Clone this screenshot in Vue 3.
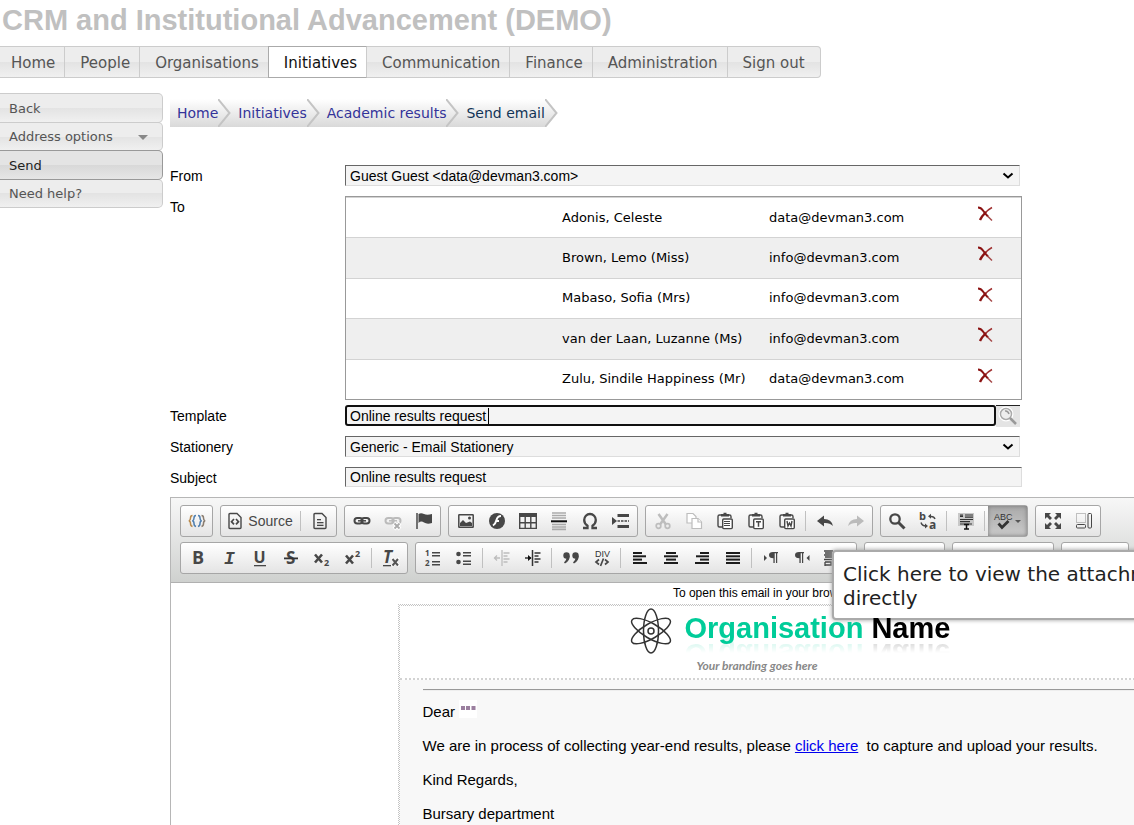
<script setup>
import { ref } from 'vue'

const nav = ['Home', 'People', 'Organisations', 'Initiatives', 'Communication', 'Finance', 'Administration', 'Sign out']
const side = [
  { label: 'Back' },
  { label: 'Address options', menu: true },
  { label: 'Send', active: true },
  { label: 'Need help?' },
]
const crumbs = ['Home', 'Initiatives', 'Academic results', 'Send email']
const recipients = [
  { name: 'Adonis, Celeste', email: 'data@devman3.com' },
  { name: 'Brown, Lemo (Miss)', email: 'info@devman3.com' },
  { name: 'Mabaso, Sofia (Mrs)', email: 'info@devman3.com' },
  { name: 'van der Laan, Luzanne (Ms)', email: 'info@devman3.com' },
  { name: 'Zulu, Sindile Happiness (Mr)', email: 'data@devman3.com' },
]
const template = ref('Online results request')
const subject = ref('Online results request')

const D = '#474747'
const lines = (rows) => rows.map(([x, y, w, h = 2]) => `<rect x="${x}" y="${y}" width="${w}" height="${h}" fill="${D}"/>`).join('')
const glyph = (t, x, y, size, extra = '') => `<text x="${x}" y="${y}" font-size="${size}" font-weight="bold" font-family="Open Sans, sans-serif" fill="${D}" ${extra}>${t}</text>`
const clip = `<path d="M5 3H3.5Q2 3 2 4.500V13.500Q2 15 3.500 15H6M13 3h.5Q15 3 15 4.500V6" fill="none" stroke="${D}" stroke-width="1.400"/><path d="M5 4.500V2h2.500V.8h3V2H13v2.500z" fill="${D}"/><rect x="6.700" y="7" width="9.600" height="9.600" rx="1" fill="#fff" stroke="${D}" stroke-width="1.400"/>`
const pilcrow = (x) => `<path d="M${x + 4} 3H${x + 9}V4.300H${x + 8.2}V14H${x + 7}V4.300H${x + 5.7}V14H${x + 4.4}V9.200Q${x} 9.200 ${x} 6Q${x} 3 ${x + 4} 3z" fill="${D}"/>`
const chain = (c) => `<g fill="none" stroke="${c}"><rect x="1.500" y="6" width="8" height="5.500" rx="2.700" stroke-width="2"/><rect x="8.500" y="6" width="8" height="5.500" rx="2.700" stroke-width="2"/><path d="M5 8.800h8" stroke-width="1.500"/></g>`

const icons = {
  braces: '<g fill="none" stroke-width="1.500"><path d="M4.500 3.500Q2.500 3.500 2.500 6T.8 9Q2.500 9 2.500 11.500T4.500 14.500" stroke="#b98a4d"/><path d="M8 3.500Q6 3.500 6 6T4.300 9Q6 9 6 11.500T8 14.500" stroke="#4f7fb0"/><path d="M10 3.500Q12 3.500 12 6T13.700 9Q12 9 12 11.500T10 14.500" stroke="#4f7fb0"/><path d="M13.500 3.500Q15.500 3.500 15.500 6T17.200 9Q15.500 9 15.500 11.500T13.500 14.500" stroke="#8a7d70"/></g>',
  source: `<path d="M3 2.500Q3 1.500 4 1.500H11L15 5.500V15.500Q15 16.500 14 16.500H4Q3 16.500 3 15.500z" fill="none" stroke="${D}" stroke-width="1.400"/><path d="M8 7L5.500 9.700 8 12.400M10 7l2.500 2.700L10 12.400" fill="none" stroke="${D}" stroke-width="1.700"/>`,
  doc: `<path d="M3 2.500Q3 1.500 4 1.500H11L15 5.500V15.500Q15 16.500 14 16.500H4Q3 16.500 3 15.500z" fill="none" stroke="${D}" stroke-width="1.400"/>` + lines([[6, 7, 4, 1.3], [6, 10, 6.5, 1.3], [6, 12.7, 6.5, 1.3]]),
  link: chain(D),
  unlink: chain('#bbb') + '<path d="M10 11l6 6M16 11l-6 6" stroke="#fff" stroke-width="4"/><path d="M10.500 11.500l5 5M15.500 11.500l-5 5" stroke="#aaa" stroke-width="1.800"/>',
  flag: `<path d="M2 1V17" stroke="${D}" stroke-width="1.500"/><path d="M3.500 2Q6 .5 9 2T17 2V11Q12 12.500 9 10.500T3.500 11z" fill="${D}"/>`,
  image: `<rect x="1.800" y="2.800" width="14.400" height="12.400" rx=".5" fill="none" stroke="${D}" stroke-width="1.500"/><path d="M3 14V11L6 8l3 3 4-1.500 2 1.500v3z" fill="${D}"/><circle cx="12.500" cy="6" r="1.500" fill="${D}"/>`,
  flash: `<circle cx="9" cy="9" r="8" fill="${D}"/><path d="M13 4Q9.500 4 8.500 8T5 13.500M8 9h3" fill="none" stroke="#fff" stroke-width="2"/>`,
  table: `<rect x="0" y="1" width="18" height="4" fill="${D}"/><path d="M.7 5v11.400h16.600V5M.7 10.700h16.600M6.200 5v11M11.800 5v11" fill="none" stroke="${D}" stroke-width="1.400"/>`,
  hr: '<path d="M2 1h14M2 3.500h14M2 6h14M2 12.500h14M2 15h14M2 17.300h14" stroke="#aaa" stroke-width="1.700"/><rect x="1" y="8.300" width="16" height="2" fill="#111"/>',
  omega: `<path d="M2 16h4.500v-2.200Q3.200 11.500 3.200 8A5.800 6 0 0 1 14.800 8Q14.800 11.500 11.500 13.800V16H16" fill="none" stroke="${D}" stroke-width="2.300"/>`,
  pagebreak: `<path d="M0 5l5 4-5 4z" fill="${D}"/><path d="M5.500 3.500H17M5.500 14.500H17" stroke="${D}" stroke-width="3"/><path d="M5.500 9H17" stroke="${D}" stroke-width="1.500" stroke-dasharray="2.500 1"/>`,
  cut: '<g fill="none" stroke="#bdbdbd"><path d="M4.500 2L12 12.500M13.500 2L6 12.500" stroke-width="2.500"/><circle cx="4.500" cy="14" r="2.300" stroke-width="1.700"/><circle cx="13.500" cy="14" r="2.300" stroke-width="1.700"/></g>',
  copy: '<g fill="#fff" stroke="#bdbdbd" stroke-width="1.200"><path d="M2 1.500H8L11 4.500V11H2z"/><path d="M7 6.500H13L16.500 10V16.500H7z"/><path d="M13 6.500V10h3.500"/></g>',
  paste: clip + lines([[8, 9, 6, 1], [8, 11, 6, 1], [8, 13, 6, 1]]),
  pastetext: clip + `<path d="M9 9.800h5M11.500 9.800v5" stroke="${D}" stroke-width="1.500"/>`,
  pasteword: clip + `<path d="M9 9l1 5 1.500-3 1.500 3 1-5" fill="none" stroke="${D}" stroke-width="1.400"/>`,
  undo: `<path d="M1 9l7-5.500V7Q15.500 7 17 14Q13.500 10.500 8 11v3.500z" fill="${D}"/>`,
  redo: '<path d="M17 9l-7-5.500V7Q2.500 7 1 14Q4.500 10.500 10 11v3.500z" fill="#bbb"/>',
  find: `<circle cx="7" cy="7" r="4.700" fill="none" stroke="${D}" stroke-width="2.300"/><path d="M10.500 10.500l6 6" stroke="${D}" stroke-width="3"/>`,
  replace: glyph('b', 0, 8, 11) + glyph('a', 10, 17, 12) + `<path d="M16 7Q15 4 11 4.500M2 10.500Q3 14 7 14" fill="none" stroke="${D}" stroke-width="1.400"/><path d="M12 1.800v5l-3-2.500zM6 11.500v5l3-2.500z" fill="${D}"/>`,
  selectall: '<rect x="1" y="1" width="16" height="13" fill="#c8c8c8"/><path d="M3 3h3M3 4.300h3M8 3h8M8 5.200h8M3 7.500h13M3 9.700h10M3 12h12" stroke="#333" stroke-width="1.200"/><path d="M7 12.500h5M9.500 12.500v4M7 17h5" stroke="#111" stroke-width="1.500"/>',
  spell: `<text x="-1" y="8" font-size="9" font-family="Liberation Sans, sans-serif" fill="#333">ABC</text><path d="M3.500 11.500L7 15.500 13.500 9" fill="none" stroke="#333" stroke-width="2.800"/>`,
  maximize: `<g fill="${D}"><path d="M1 1h6L5 3l3 3-2 2-3-3-2 2zM17 1v6l-2-2-3 3-2-2 3-3-2-2zM1 17v-6l2 2 3-3 2 2-3 3 2 2zM17 17h-6l2-2-3-3 2-2 3 3 2-2z"/></g>`,
  blocks: `<path d="M1.500 1.500h9v9h-9z" fill="none" stroke="#888" stroke-dasharray="1 1"/><rect x="1.500" y="12.500" width="9" height="3.500" rx="1" fill="none" stroke="${D}"/><rect x="13" y="1.500" width="3.500" height="14.500" rx="1" fill="none" stroke="${D}"/>`,
  bold: glyph('B', 3, 15, 18),
  italic: glyph('I', 4, 15, 18, 'font-style="italic" style="font-family:Liberation Mono"'),
  underline: glyph('U', 2.5, 14, 16) + lines([[3, 16, 12, 1.3]]),
  strike: glyph('S', 4, 15, 17) + '<rect x="2" y="8.500" width="14" height="1.800" fill="#333"/>',
  sub: '<path d="M2 5.500l7 8M9 5.500l-7 8" stroke="#474747" stroke-width="2.600"/>' + glyph('2', 11, 17, 9),
  sup: '<path d="M2 6.500l7 8M9 6.500l-7 8" stroke="#474747" stroke-width="2.600"/>' + glyph('2', 11, 8, 9),
  clear: glyph('T', 1, 14, 17, 'font-style="italic"') + lines([[1, 16, 8, 1.3]]) + '<path d="M10 9l7 8M17 9l-7 8" stroke="#fff" stroke-width="3"/><path d="M10.500 10l5.500 6.500M16 10l-5.500 6.500" stroke="#555" stroke-width="2"/>',
  ol: glyph('1', 1, 7, 8) + glyph('2', 1, 17, 8) + lines([[8, 3, 8, 1.5], [8, 6, 8, 1.5], [8, 12, 8, 1.5], [8, 15, 8, 1.5]]),
  ul: `<circle cx="3.500" cy="5" r="2.300" fill="${D}"/><circle cx="3.500" cy="13" r="2.300" fill="${D}"/>` + lines([[8, 3, 8, 1.5], [8, 6, 8, 1.5], [8, 11.5, 8, 1.5], [8, 14.5, 8, 1.5]]),
  outdent: '<path d="M9 1v16M1 9h6M4 6.500L1.500 9 4 11.500M10.500 4h6M10.500 7h4M10.500 10h6M10.500 13h4" fill="none" stroke="#bdbdbd" stroke-width="1.300"/>',
  indent: '<path d="M8.500 1v16M1 9h6M10.500 4h6M10.500 7h4M10.500 10h6M10.500 13h4" fill="none" stroke="#333" stroke-width="1.500"/><path d="M4 6l3.500 3L4 12z" fill="#111"/>',
  quote: `<g fill="${D}"><circle cx="4.500" cy="6.500" r="3.200"/><path d="M7.700 6.500Q8 12 3 14.500L2 13.500Q4.500 11.500 4.500 9z"/><circle cx="13.500" cy="6.500" r="3.200"/><path d="M16.700 6.500Q17 12 12 14.500L11 13.500Q13.500 11.500 13.500 9z"/></g>`,
  div: `<text x="2" y="7.500" font-size="9" font-family="Liberation Sans, sans-serif" fill="#333">DIV</text><path d="M6 10.500L3 13l3 2.500M12 10.500l3 2.500-3 2.500M10.500 9.500l-3 7.500" fill="none" stroke="${D}" stroke-width="1.700"/>`,
  left: lines([[2, 3, 9], [2, 6.3, 13], [2, 9.6, 9], [2, 13, 14]]),
  center: lines([[4, 3, 10], [2, 6.3, 14], [4, 9.6, 10], [2, 13, 14]]),
  right: lines([[7, 3, 9], [3, 6.3, 13], [7, 9.6, 9], [2, 13, 14]]),
  justify: lines([[2, 3, 14], [2, 6.3, 14], [2, 9.6, 14], [2, 13, 14]]),
  ltr: `<path d="M2 6l3 3-3 3z" fill="${D}"/>` + pilcrow(7),
  rtl: pilcrow(2) + `<path d="M16.500 6l-3 3 3 3z" fill="${D}"/>`,
  language: '<path d="M2 2h9M3 4h7M2 6h9M3 8h7M2 10.500h9M3 13v4M3 13h6v3H3" fill="none" stroke="#444" stroke-width="1.300"/>',
}
for (const k of ['left', 'center', 'right', 'justify']) icons[k] = icons[k].replaceAll(D, '#1c1c1c')

const S = '|'
const rows = [
  [
    ['braces'],
    ['source', S, 'doc'],
    ['link', 'unlink', 'flag'],
    ['image', 'flash', 'table', 'hr', 'omega', 'pagebreak'],
    ['cut', 'copy', 'paste', 'pastetext', 'pasteword', S, 'undo', 'redo'],
    ['find', 'replace', S, 'selectall', S, 'spell'],
    ['maximize', 'blocks'],
  ],
  [
    ['bold', 'italic', 'underline', 'strike', 'sub', 'sup', S, 'clear'],
    ['ol', 'ul', S, 'outdent', 'indent', S, 'quote', 'div', S, 'left', 'center', 'right', 'justify', S, 'ltr', 'rtl', 'language'],
    ['combo-s'],
    ['combo-m'],
    ['combo-xs'],
  ],
]
</script>

<template>
  <div class="page">
    <h1>CRM and Institutional Advancement (DEMO)</h1>
    <nav class="topnav" aria-label="Main">
      <a v-for="n in nav" :key="n" href="#" :class="{ active: n === 'Initiatives' }">{{ n }}</a>
    </nav>

    <div class="columns">
      <aside>
        <a v-for="s in side" :key="s.label" href="#" :class="{ active: s.active }">
          {{ s.label }}<i v-if="s.menu" class="caret-down"></i>
        </a>
      </aside>

      <main>
        <nav class="crumbs" aria-label="Breadcrumb">
          <a v-for="(c, i) in crumbs" :key="c" href="#" :class="{ last: i === 3 }">
            {{ c }}
            <svg width="13" height="28" viewBox="0 0 13 28" aria-hidden="true">
              <path d="M0 0H13V28H0L12 14z" :fill="i === 3 ? '#fff' : 'none'" />
              <path d="M0 0L11.500 14 0 28" fill="none" stroke="#c4c4c4" stroke-width="2" />
            </svg>
          </a>
        </nav>

        <form class="form" @submit.prevent>
          <label for="from">From</label>
          <div class="select">
            <select id="from"><option>Guest Guest &lt;data@devman3.com&gt;</option></select>
            <svg width="12" height="8" viewBox="0 0 12 8"><path d="M1.500 1.500L6 5.500 10.500 1.500" /></svg>
          </div>

          <span class="label">To</span>
          <table>
            <tbody>
              <tr v-for="r in recipients" :key="r.name">
                <td class="blank"></td>
                <td class="name">{{ r.name }}</td>
                <td class="mail">{{ r.email }}</td>
                <td class="remove">
                  <button type="button" :aria-label="'Remove ' + r.name">
                    <svg width="16" height="16" viewBox="0 0 16 16" fill="none" stroke="#8b1212">
                      <path d="M1 1.500Q4 1.500 6 4.500T11 10.500" stroke-width="2" />
                      <path d="M10.500 10L15 14.500" stroke="#a54848" stroke-width="1.500" />
                      <path d="M15 1.500Q10.500 4 8 7" stroke="#a03030" stroke-width="1.500" />
                      <path d="M9 6Q4.500 10.500 3 14" stroke-width="2.400" />
                    </svg>
                  </button>
                </td>
              </tr>
            </tbody>
          </table>

          <label for="template">Template</label>
          <div class="lookup">
            <input id="template" v-model="template" type="text" />
            <span class="text-cursor"></span>
            <button type="button" aria-label="Search templates">
              <svg width="20" height="20" viewBox="0 0 20 20">
                <circle cx="8" cy="8" r="6" fill="#eee" stroke="#fff" stroke-width="3" />
                <circle cx="8" cy="8" r="5.500" fill="none" stroke="#aaa" stroke-width="1.500" />
                <path d="M7 5Q10 4.500 11 8" fill="none" stroke="#999" stroke-width="1.500" />
                <path d="M12 12l6 6" stroke="#999" stroke-width="2.500" />
              </svg>
            </button>
          </div>

          <label for="stationery">Stationery</label>
          <div class="select">
            <select id="stationery"><option>Generic - Email Stationery</option></select>
            <svg width="12" height="8" viewBox="0 0 12 8"><path d="M1.500 1.500L6 5.500 10.500 1.500" /></svg>
          </div>

          <label for="subject">Subject</label>
          <input id="subject" v-model="subject" class="subject" type="text" />
        </form>

        <section class="editor">
          <div class="toolbar">
            <div v-for="(row, ri) in rows" :key="ri" class="row">
              <div v-for="(g, gi) in row" :key="gi" class="group" :class="{ solo: g.length === 1, end: g.includes('spell') }">
                <template v-for="(b, bi) in g" :key="bi">
                  <span v-if="b === S" class="sep"></span>
                  <span v-else-if="b.startsWith('combo')" :class="b"></span>
                  <button v-else type="button" :class="b" :aria-label="b">
                    <svg width="18" height="18" viewBox="0 0 18 18" v-html="icons[b]"></svg>
                    <span v-if="b === 'source'">Source</span>
                    <i v-if="b === 'spell'" class="tiny"></i>
                  </button>
                </template>
              </div>
            </div>
            <div class="tooltip" role="tooltip">Click here to view the attachment directly</div>
          </div>

          <div class="canvas">
            <p class="browser">To open this email in your browser click here</p>
            <div class="email">
              <header>
                <svg class="atom" width="42" height="46" viewBox="0 0 42 46" fill="none" stroke="#333" stroke-width="1.500">
                  <ellipse cx="21" cy="23" rx="7.500" ry="22" />
                  <ellipse cx="21" cy="23" rx="7.500" ry="22" transform="rotate(60 21 23)" />
                  <ellipse cx="21" cy="23" rx="7.500" ry="22" transform="rotate(-60 21 23)" />
                  <circle cx="21" cy="23" r="3" />
                </svg>
                <div>
                  <div class="brand"><b>Organisation</b> Name</div>
                  <div class="tag">Your branding goes here</div>
                </div>
              </header>
              <article>
                <hr />
                <p>Dear <svg class="field" width="18" height="18" viewBox="0 0 18 18"><path fill="#fff" d="M0 0h18v18H0z" /><path fill="#9b7f9f" d="M2 6h4v4H2zM7 6h4v4H7zM12.500 6h4v4h-4z" /></svg></p>
                <p>We are in process of collecting year-end results, please <a href="#">click here</a>&nbsp; to capture and upload your results.</p>
                <p>Kind Regards,</p>
                <p>Bursary department</p>
              </article>
            </div>
          </div>
        </section>
      </main>
    </div>
  </div>
</template>

<style>
html, body { margin: 0; background: #fff; }
body { overflow: hidden; }
</style>

<style scoped>
* { box-sizing: border-box; }
.page { height: 100vh; overflow: hidden; font-family: 'Liberation Sans', Arial, sans-serif; color: #000; }
h1 { margin: 0; padding: 0 2px 6px; font-size: 29px; line-height: 40px; font-weight: bold; color: #c0c0c0; white-space: nowrap; }
a { text-decoration: none; }

.topnav { display: flex; height: 32px; }
.topnav a { padding: 0 9px 0 15px; border: solid #ccc; border-width: 1px 1px 1px 0; font: 15px/32px 'DejaVu Sans', Verdana, sans-serif; color: #555; white-space: nowrap; background: linear-gradient(#ededed 50%, #e3e3e3 50%, #f0f0f0); }
.topnav a:first-child { padding-left: 11px; }
.topnav a:last-child { padding-right: 15px; border-radius: 0 4px 4px 0; }
.topnav a.active { border: 1px solid #aaa; border-right-color: #ccc; margin-left: -1px; background: #fff; color: #111; }

.columns { display: flex; gap: 7px; padding-top: 15px; }
aside { flex: 0 0 163px; display: flex; flex-direction: column; }
aside a { display: flex; justify-content: space-between; align-items: center; height: 30px; padding: 1px 14px 0 9px; margin-bottom: -1px; border: 1px solid #ccc; border-left: 0; border-radius: 0 5px 5px 0; font: 13px/26px 'DejaVu Sans', Verdana, sans-serif; color: #555; background: linear-gradient(#ededed 50%, #e3e3e3 50%, #f0f0f0); }
aside a + a { height: 29px; }
aside a.active { height: 30px; border-color: #999; color: #222; background: linear-gradient(#e4e4e4 50%, #d8d8d8 50%, #e6e6e6); z-index: 1; }
.caret-down { border: 5px solid transparent; border-top-color: #888; border-bottom: 0; }

main { flex: 1; min-width: 0; padding-top: 6px; }
.crumbs { display: flex; height: 28px; }
.crumbs a { display: flex; padding-left: 7px; font: 14px/28px 'DejaVu Sans', Verdana, sans-serif; color: #339; white-space: nowrap; background: linear-gradient(#fff, #d9d9d9); }
.crumbs a.last { color: #113355; }

.form { display: grid; grid-template-columns: 175px minmax(0, 677px); row-gap: 10px; padding-top: 38px; }
.form > label, .form > .label { font-size: 14px; line-height: 22px; height: 21px; }
.select { position: relative; width: calc(100% - 2px); height: 21px; }
select, input { display: block; width: 100%; height: 21px; margin: 0; padding: 0 4px; border: 1px solid #ddd; border-top-color: #666; border-left-color: #666; border-radius: 0; background: #f4f4f4; font: 14px/18px 'Liberation Sans', Arial, sans-serif; color: #000; outline: 0; appearance: none; }
.select svg { position: absolute; right: 6px; top: 7px; fill: none; stroke: #000; stroke-width: 2; }
table { width: 100%; height: 204px; border-collapse: separate; border-spacing: 0; border: 1px solid #999; table-layout: fixed; margin-bottom: -5px; font: 13px/16px 'DejaVu Sans', Verdana, sans-serif; }
td { padding: 0; border-top: 1px solid #d3d3d3; white-space: nowrap; }
tr:nth-child(even) { background: #efefef; }
.blank { width: 216px; }
.name { width: 207px; }
.mail { width: 208px; }
.remove { vertical-align: top; padding-top: 8px; }
.remove button, .lookup button { padding: 0; border: 0; background: none; display: block; }
.remove svg { display: block; }
.lookup { position: relative; display: flex; width: calc(100% - 2px); height: 21px; }
.lookup input { flex: 1; padding: 0 3px; border: 2px solid #101010; border-radius: 3px; }
.lookup button { width: 24px; height: 22px; background: #e4e4e4; border-top: 1px solid #222; }
.text-cursor { position: absolute; left: 143px; top: 3px; width: 1px; height: 16px; background: #000; }
.subject { height: 20px; padding: 0 4px; }

.editor { margin: 9px -278px 0 0; border: 1px solid #b6b6b6; }
.toolbar { position: relative; display: flex; flex-direction: column; gap: 5px; height: 85px; padding: 7px 9px; border-bottom: 1px solid #b0b0b0; background: linear-gradient(#f7f7f7, #cfd1cf); }
.row { display: flex; gap: 7px; height: 32px; }
.group { display: flex; align-items: center; flex: none; padding: 0 1px; border: 1px solid #a6a6a6; border-radius: 3px; background: linear-gradient(#fff, #e4e4e4); }
.group.solo { padding: 0; }
.group.end { padding: 0; }
.group button { display: flex; align-items: center; justify-content: center; width: 31px; height: 30px; padding: 0; border: 0; background: none; color: #474747; }
.group svg { overflow: visible; }
.group button.source { width: 75px; gap: 4px; font: 14px 'Liberation Sans', Arial, sans-serif; }
.group button.language { width: 38px; justify-content: flex-start; padding-left: 5px; }
.group button.spell { width: 39px; gap: 2px; background: linear-gradient(#aaa, #cacaca); box-shadow: inset 0 0 4px #777; }
.sep { width: 1px; height: 20px; margin: 0 3px; background: #c0c0c0; }
.tiny { border: 3px solid transparent; border-top-color: #555; border-bottom: 0; }
.combo-s { width: 79px; }
.combo-m { width: 100px; }
.combo-xs { width: 66px; }
.tooltip { position: absolute; left: 661px; top: 52px; width: 390px; padding: 10px 9px 8px; border: 2px solid #aaa; border-radius: 4px; background: #fff; box-shadow: 0 0 4px #999; font: 20px/24px 'DejaVu Sans', Verdana, sans-serif; color: #222; }

.canvas { background: #fff; padding-bottom: 8px; }
.browser { margin: 0; padding-top: 3px; text-align: center; font-size: 12px; line-height: 15px; }
.email { width: 785px; margin: 4px auto 0; border: 1px dotted #c4c4c4; outline: 1px dotted #c4c4c4; }
header { display: flex; gap: 13px; height: 74px; padding: 2px 0 0 230px; border-bottom: 2px dotted #d3d3d3; }
.brand { padding-top: 1px; font-size: 29px; line-height: 38px; font-weight: bold; white-space: nowrap; -webkit-box-reflect: below -12px linear-gradient(transparent 54%, rgba(0, 0, 0, 0.12) 75%); }
.brand b { color: #0c9; }
.tag { padding: 11px 0 0 12px; font: italic bold 12px/16px Lato, sans-serif; color: #888; }
article { padding: 9px 23px 100px; background: #f8f8f8; font-size: 15px; line-height: 18px; }
hr { margin: 0 0 12px; border: 0; border-top: 1px solid #999; border-bottom: 1px solid #eee; }
article p { margin: 0 0 16px; }
article p a { color: #00e; text-decoration: underline; }
.field { margin: -6px 0 0; vertical-align: -1px; }
</style>
